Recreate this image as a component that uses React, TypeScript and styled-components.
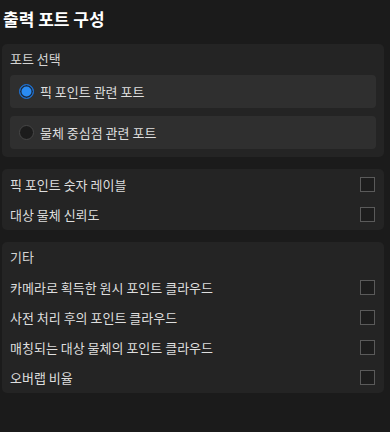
import * as React from "react";
import styled, { createGlobalStyle } from "styled-components";

const GlobalStyle = createGlobalStyle`
  html, body {
    margin: 0;
    padding: 0;
    background: #1b1b1b;
  }
  body {
    font-family: "Noto Sans CJK KR", "Noto Sans", sans-serif;
    color: #dcdcdc;
  }
`;

const Page = styled.div`
  min-height: 432px;
  box-sizing: border-box;
  padding: 0 6px 0 2px;
  display: flex;
  flex-direction: column;
  gap: 12px;
`;

const Title = styled.h1`
  margin: 0;
  padding: 6px 0 0 1px;
  height: 32px;
  box-sizing: border-box;
  font-size: 17px;
  line-height: 26px;
  font-weight: 700;
  color: #ffffff;
`;

const Card = styled.section`
  background: #242424;
  border-radius: 5px;
  padding: 4px 8px 5px;
  display: flex;
  flex-direction: column;
  gap: 8px;
`;

const Label = styled.div`
  height: 22px;
  line-height: 22px;
  font-size: 13px;
  color: #d4d4d4;
`;

const RadioGroup = styled.div`
  display: flex;
  flex-direction: column;
  gap: 8px;
  margin: -3px 0 3px;
`;

const RadioItem = styled.label`
  height: 33px;
  background: #2f2f2f;
  border-radius: 4px;
  display: flex;
  align-items: center;
  gap: 6px;
  padding-left: 9px;
  font-size: 13px;
  color: #dedede;
`;

const RadioDot = styled.span<{ $on: boolean }>`
  width: 15px;
  height: 15px;
  box-sizing: border-box;
  border-radius: 50%;
  flex: none;
  border: 1.5px solid ${(p) => (p.$on ? "#1d6ed0" : "#474747")};
  background: ${(p) => (p.$on ? "#2a8bf2" : "#1c1c1c")};
  box-shadow: ${(p) => (p.$on ? "inset 0 0 0 1.5px #1a2a40" : "none")};
`;

const Row = styled.label`
  height: 22px;
  display: flex;
  align-items: center;
  justify-content: space-between;
  font-size: 13px;
  color: #dedede;
`;

const Check = styled.span`
  width: 15px;
  height: 15px;
  box-sizing: border-box;
  border: 1.5px solid #5a5a5a;
  background: #1d1d1d;
  margin-right: 1px;
`;

const ports = ["픽 포인트 관련 포트", "물체 중심점 관련 포트"];
const labels = ["픽 포인트 숫자 레이블", "대상 물체 신뢰도"];
const others = [
  "카메라로 획득한 원시 포인트 클라우드",
  "사전 처리 후의 포인트 클라우드",
  "매칭되는 대상 물체의 포인트 클라우드",
  "오버랩 비율",
];

export default function App() {
  const [port, setPort] = React.useState(0);
  return (
    <>
      <GlobalStyle />
      <Page>
        <Title>출력 포트 구성</Title>
        <Card>
          <Label>포트 선택</Label>
          <RadioGroup>
            {ports.map((p, i) => (
              <RadioItem key={p} onClick={() => setPort(i)}>
                <RadioDot $on={port === i} />
                {p}
              </RadioItem>
            ))}
          </RadioGroup>
        </Card>
        <Card>
          {labels.map((l) => (
            <Row key={l}>
              {l}
              <Check />
            </Row>
          ))}
        </Card>
        <Card>
          <Label>기타</Label>
          {others.map((l) => (
            <Row key={l}>
              {l}
              <Check />
            </Row>
          ))}
        </Card>
      </Page>
    </>
  );
}
